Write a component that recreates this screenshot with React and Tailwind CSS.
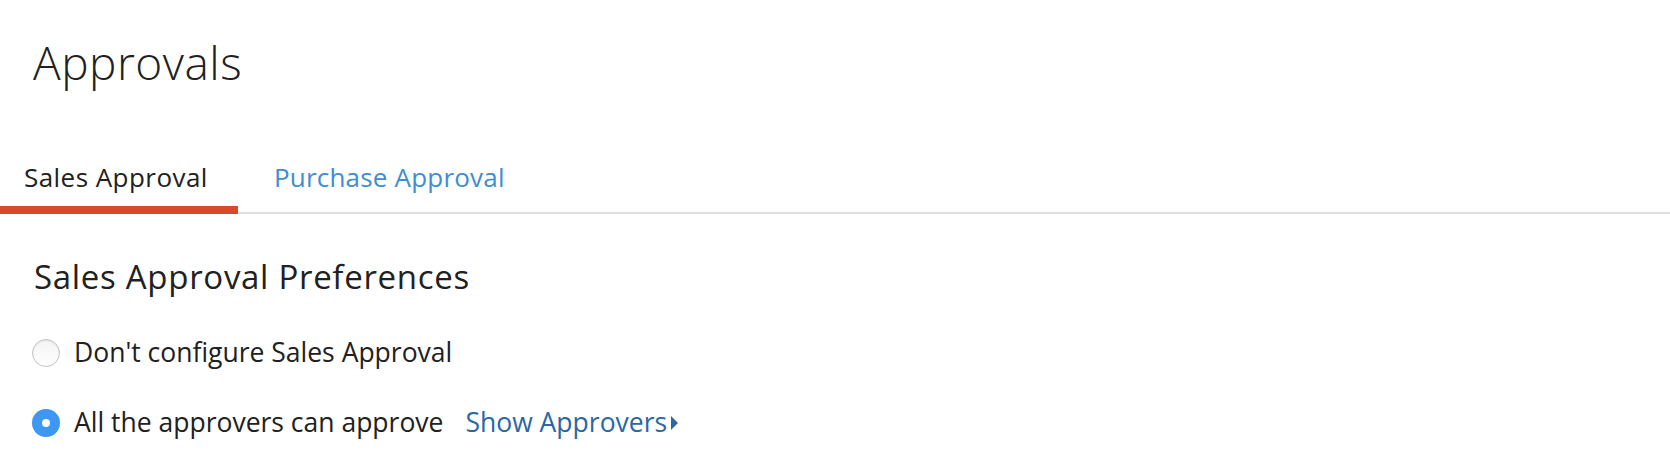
export default function App() {
  return (
    <div className="w-[1670px] h-[474px] bg-white text-[#212121] font-['Open_Sans',sans-serif] overflow-hidden">
      <div className="pl-[33px] pt-[31px]">
        <h1 className="text-[46px] leading-[62px] font-light tracking-[0.5px]">Approvals</h1>
      </div>

      <div className="mt-[47px] flex border-b-2 border-[#dddddd]">
        <div className="relative -mb-[2px] w-[238px] h-[74px] pt-[8px] pl-[24px] flex items-center border-b-[8px] border-[#d9472f] text-[26px] tracking-[0.45px]">
          Sales Approval
        </div>
        <div className="relative -mb-[2px] h-[74px] pt-[8px] pl-[36px] flex items-center border-b-[8px] border-transparent text-[26px] tracking-[0.2px] text-[#408dd2]">
          Purchase Approval
        </div>
      </div>

      <div className="pl-[34px] pt-[43px]">
        <h2 className="text-[33px] leading-[40px] tracking-[0.7px]">Sales Approval Preferences</h2>

        <label className="mt-[36px] flex items-center h-[40px] text-[26.5px]">
          <span className="ml-[-2px] w-[28px] h-[28px] rounded-full border border-[#c4c4c4] bg-gradient-to-b from-[#f4f4f4] to-white shadow-[inset_0_1px_2px_rgba(0,0,0,0.08)]" />
          <span className="ml-[14px]">Don't configure Sales Approval</span>
        </label>

        <label className="mt-[30px] flex items-center h-[40px] text-[26.5px]">
          <span className="ml-[-2px] w-[28px] h-[28px] rounded-full bg-[#3d97f5] flex items-center justify-center">
            <span className="w-[8px] h-[8px] rounded-full bg-white" />
          </span>
          <span className="ml-[14px]">All the approvers can approve</span>
          <span className="ml-[22px] flex items-center text-[#2a67a6]">
            Show Approvers
            <svg width="8" height="14" viewBox="0 0 8 14" className="ml-[4px]">
              <path d="M0 0 L7 7 L0 14 Z" fill="#2a67a6" />
            </svg>
          </span>
        </label>
      </div>
    </div>
  );
}
